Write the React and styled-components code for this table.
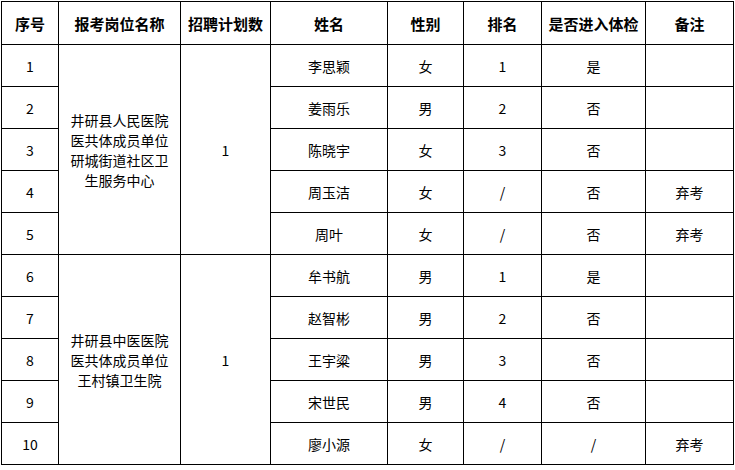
import React from 'react';
import styled, { createGlobalStyle } from 'styled-components';

const GlobalStyle = createGlobalStyle`
  html, body {
    margin: 0;
    padding: 0;
    background: #ffffff;
  }
  body {
    font-family: "Noto Sans CJK SC", "Liberation Sans", sans-serif;
    color: #000000;
  }
`;

const columns = [57, 122, 90, 117, 76, 78, 104, 88];
const headers = ['序号', '报考岗位名称', '招聘计划数', '姓名', '性别', '排名', '是否进入体检', '备注'];

const groups = [
  {
    post: ['井研县人民医院', '医共体成员单位', '研城街道社区卫', '生服务中心'],
    plan: '1',
    rows: [
      ['1', '李思颖', '女', '1', '是', ''],
      ['2', '姜雨乐', '男', '2', '否', ''],
      ['3', '陈晓宇', '女', '3', '否', ''],
      ['4', '周玉洁', '女', '/', '否', '弃考'],
      ['5', '周叶', '女', '/', '否', '弃考'],
    ],
  },
  {
    post: ['井研县中医医院', '医共体成员单位', '王村镇卫生院'],
    plan: '1',
    rows: [
      ['6', '牟书航', '男', '1', '是', ''],
      ['7', '赵智彬', '男', '2', '否', ''],
      ['8', '王宇粱', '男', '3', '否', ''],
      ['9', '宋世民', '男', '4', '否', ''],
      ['10', '廖小源', '女', '/', '/', '弃考'],
    ],
  },
];

const Page = styled.div`
  padding: 1px 0 0 1px;
`;

const Table = styled.table`
  border-collapse: collapse;
  table-layout: fixed;
  width: 732px;
`;

const HeadCell = styled.th`
  height: 42px;
  padding: 0;
  border: 1px solid #000;
  font-size: 15px;
  font-weight: 700;
  text-align: center;
  vertical-align: middle;
`;

const Cell = styled.td`
  height: 41px;
  padding: 0;
  border: 1px solid #000;
  font-size: 14px;
  line-height: 20px;
  text-align: center;
  vertical-align: middle;
  white-space: nowrap;
`;

const PostCell = styled(Cell)`
  padding-top: ${(p) => p.$shift || 0}px;
`;

const Line = styled.div`
  line-height: 20px;
`;

export default function App() {
  return (
    <Page>
      <GlobalStyle />
      <Table>
        <colgroup>
          {columns.map((w, i) => (
            <col key={i} style={{ width: w }} />
          ))}
        </colgroup>
        <thead>
          <tr>
            {headers.map((h) => (
              <HeadCell key={h}>{h}</HeadCell>
            ))}
          </tr>
        </thead>
        <tbody>
          {groups.map((g) =>
            g.rows.map((r, i) => (
              <tr key={r[0]}>
                <Cell>{r[0]}</Cell>
                {i === 0 && (
                  <>
                    <PostCell rowSpan={g.rows.length}>
                      {g.post.map((l) => (
                        <Line key={l}>{l}</Line>
                      ))}
                    </PostCell>
                    <Cell rowSpan={g.rows.length}>{g.plan}</Cell>
                  </>
                )}
                <Cell>{r[1]}</Cell>
                <Cell>{r[2]}</Cell>
                <Cell>{r[3]}</Cell>
                <Cell>{r[4]}</Cell>
                <Cell>{r[5]}</Cell>
              </tr>
            ))
          )}
        </tbody>
      </Table>
    </Page>
  );
}
